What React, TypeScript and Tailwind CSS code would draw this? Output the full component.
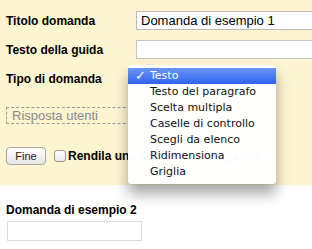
import React from 'react';

const menuItems = [
  'Testo',
  'Testo del paragrafo',
  'Scelta multipla',
  'Caselle di controllo',
  'Scegli da elenco',
  'Ridimensiona',
  'Griglia',
];

export default function App() {
  return (
    <div className="relative w-[312px] h-[249px] overflow-hidden bg-white font-['Liberation_Sans',Arial,sans-serif] text-black">
      {/* Question editor */}
      <div className="bg-[#fdf4d0] h-[185px] pt-[11px] pl-[6px]">
        <div className="flex items-center h-[19px]">
          <div className="w-[130px] text-[12px] font-bold">Titolo domanda</div>
          <div className="flex-1 h-[19px] bg-white border border-[#b9b9b9] border-r-0 pl-[4px] text-[13px] leading-[17px]">
            Domanda di esempio 1
          </div>
        </div>
        <div className="flex items-center h-[19px] mt-[10px]">
          <div className="w-[130px] text-[12px] font-bold">Testo della guida</div>
          <div className="flex-1 h-[19px] bg-white border border-[#c4c4c4] border-r-0" />
        </div>
        <div className="flex items-center h-[19px] mt-[10px]">
          <div className="w-[130px] text-[12px] font-bold">Tipo di domanda</div>
        </div>
        <div className="mt-[19px] w-[140px] h-[17px] border border-dashed border-[#9a9a9a] pl-[5px] text-[13px] leading-[15px] text-[#8a8a8a]">
          Risposta utenti
        </div>
        <div className="flex items-center mt-[23px] h-[18px]">
          <button className="h-[18px] w-[40px] rounded-[4px] border border-[#a8a8a8] bg-gradient-to-b from-white to-[#e6e6e6] text-[11px] leading-[16px] text-[#222]">
            Fine
          </button>
          <span className="ml-[8px] w-[12px] h-[12px] rounded-[3px] border border-[#9a9a9a] bg-gradient-to-b from-white to-[#e8e8e8]" />
          <span className="ml-[2px] w-[190px] overflow-hidden text-[12px] font-bold whitespace-nowrap">Rendila una domanda obbligatoria</span>
        </div>
      </div>

      {/* Next question */}
      <div className="pl-[6px] pt-[18px]">
        <div className="text-[12px] font-bold leading-[14px]">Domanda di esempio 2</div>
        <div className="mt-[4px] ml-[1px] w-[135px] h-[20px] border border-[#dcdcdc] bg-white" />
      </div>

      {/* Open select menu */}
      <div className="absolute left-[128px] top-[65px] w-[148px] h-[119px] pt-[3px] rounded-[4px] bg-white/[0.98] shadow-[0_10px_14px_rgba(0,0,0,0.35)] font-['DejaVu_Sans',Verdana,sans-serif] text-[11px]">
        {menuItems.map((item, i) => (
          <div
            key={item}
            className={
              i === 0
                ? 'relative h-[16px] leading-[16px] pl-[22px] text-white bg-gradient-to-b from-[#6a95f6] to-[#2f63ea]'
                : 'h-[16px] leading-[16px] pl-[22px] text-[#111]'
            }
          >
            {i === 0 && <span className="absolute left-[7px] top-0 text-[13px] font-bold">✓</span>}
            {item}
          </div>
        ))}
      </div>
    </div>
  );
}
